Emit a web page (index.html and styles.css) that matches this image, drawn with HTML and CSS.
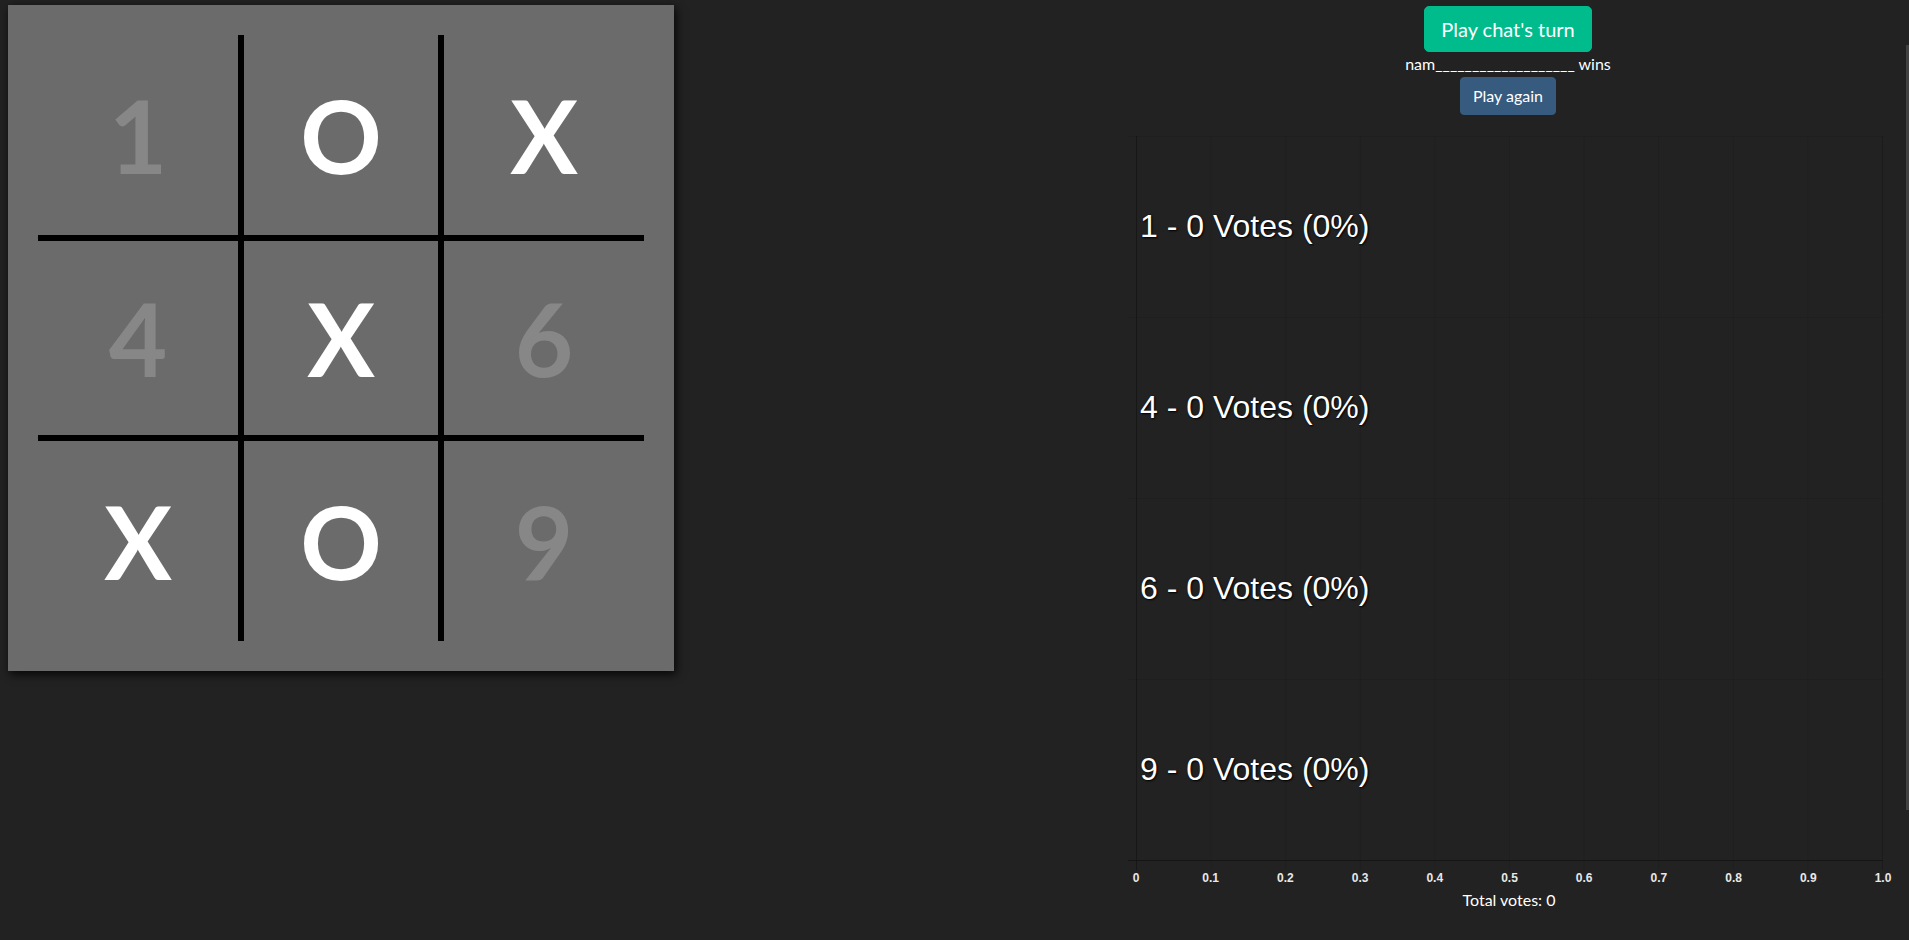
FILE: index.html
```html
<!DOCTYPE html>
<html lang="en">
<head>
<meta charset="utf-8">
<title>Tic Tac Toe</title>
<link rel="stylesheet" href="styles.css">
</head>
<body>
<main class="page">
  <section class="board">
    <div class="grid">
      <div class="cell num">1</div>
      <div class="cell mark">O</div>
      <div class="cell mark">X</div>
      <div class="cell num">4</div>
      <div class="cell mark">X</div>
      <div class="cell num">6</div>
      <div class="cell mark">X</div>
      <div class="cell mark">O</div>
      <div class="cell num">9</div>
    </div>
  </section>

  <section class="panel">
    <div class="controls">
      <button class="btn btn-success btn-lg">Play chat's turn</button>
      <p class="winner">nam___________________ wins</p>
      <button class="btn btn-primary">Play again</button>
    </div>

    <div class="chart">
      <div class="yticks"></div>
      <div class="plot">
        <div class="band"><span class="vote">1 - 0 Votes (0%)</span></div>
        <div class="band"><span class="vote">4 - 0 Votes (0%)</span></div>
        <div class="band"><span class="vote">6 - 0 Votes (0%)</span></div>
        <div class="band"><span class="vote">9 - 0 Votes (0%)</span></div>
      </div>
      <div class="corner"></div>
      <div class="xticks"></div>
      <div class="spacer"></div>
      <div class="xlabels">
        <span>0</span><span>0.1</span><span>0.2</span><span>0.3</span><span>0.4</span><span>0.5</span><span>0.6</span><span>0.7</span><span>0.8</span><span>0.9</span><span>1.0</span>
      </div>
    </div>
    <p class="total">Total votes: 0</p>
  </section>
</main>
<div class="scrollbar"></div>
</body>
</html>
```

FILE: styles.css
```css
html, body {
  margin: 0;
  padding: 0;
  background: #222222;
  color: #ffffff;
  font-family: Lato, "Open Sans", "Liberation Sans", sans-serif;
  font-size: 16px;
  line-height: 1.5;
  overflow: hidden;
}

.page {
  display: flex;
  justify-content: space-between;
  align-items: flex-start;
  padding: 5px 9px 0 8px;
  height: 940px;
  box-sizing: border-box;
}

/* ---------- board ---------- */
.board {
  width: 666px;
  height: 666px;
  box-sizing: border-box;
  padding: 30px;
  background: #6b6b6b;
  box-shadow: 2px 3px 9px rgba(0, 0, 0, 0.85);
}

.grid {
  display: grid;
  grid-template-columns: 200px 194px 200px;
  grid-template-rows: 200px 194px 200px;
  gap: 6px;
  background: #000000;
  width: 606px;
  height: 606px;
}

.cell {
  background: #6b6b6b;
  display: flex;
  align-items: center;
  justify-content: center;
  font-family: Lato, "Liberation Sans", sans-serif;
  font-weight: 700;
  font-size: 101px;
  line-height: normal;
}

.cell.num { color: #878787; }
.cell.mark { color: #ffffff; }

/* ---------- right panel ---------- */
.panel {
  width: 784px;
  display: flex;
  flex-direction: column;
  align-items: stretch;
}

.controls {
  display: flex;
  flex-direction: column;
  align-items: center;
  padding-top: 1px;
}

.btn {
  font-family: Lato, "Open Sans", sans-serif;
  color: #ffffff;
  border: 1px solid transparent;
  cursor: pointer;
  margin: 0;
}

.btn-success {
  background: #00bc8c;
  border-color: #00bc8c;
}

.btn-lg {
  font-size: 20px;
  line-height: 28px;
  padding: 8px 16px;
  border-radius: 5px;
}

.btn-primary {
  background: #375a7f;
  border-color: #375a7f;
  font-size: 16px;
  line-height: 24px;
  padding: 6px 12px;
  border-radius: 4px;
}

.winner {
  margin: 0 0 1px;
  font-size: 16px;
  line-height: 24px;
}

/* ---------- chart ---------- */
.chart {
  display: grid;
  grid-template-columns: 8px 747px;
  grid-template-rows: 725px 9px auto;
  margin: 21px 0 0 12px;
}

.yticks {
  background-image: linear-gradient(to bottom, rgba(0, 0, 0, 0.1) 1px, transparent 1px);
  background-size: 100% 25%;
  border-bottom: 1px solid rgba(0, 0, 0, 0.3);
}

.plot {
  display: grid;
  grid-template-rows: repeat(4, 1fr);
  border-right: 1px solid rgba(0, 0, 0, 0.1);
  border-bottom: 1px solid rgba(0, 0, 0, 0.3);
  background-image:
    linear-gradient(to right, rgba(0, 0, 0, 0.25) 1px, transparent 1px),
    linear-gradient(to right, rgba(0, 0, 0, 0.1) 1px, transparent 1px),
    linear-gradient(to bottom, rgba(0, 0, 0, 0.1) 1px, transparent 1px);
  background-size: 100% 100%, 10% 100%, 100% 25%;
  background-repeat: no-repeat, repeat, repeat;
}

.band {
  display: flex;
  align-items: center;
  padding-left: 4px;
}

.vote {
  font-family: "Liberation Sans", Arial, sans-serif;
  font-size: 32px;
  line-height: 1;
  color: #ffffff;
  text-shadow: 1px 1px 2px #000000, 0 0 1px #000000;
  position: relative;
  top: -1px;
}

.xticks {
  border-right: 1px solid rgba(0, 0, 0, 0.1);
  background-image:
    linear-gradient(to right, rgba(0, 0, 0, 0.25) 1px, transparent 1px),
    linear-gradient(to right, rgba(0, 0, 0, 0.1) 1px, transparent 1px);
  background-size: 100% 100%, 10% 100%;
  background-repeat: no-repeat, repeat;
}

.xlabels {
  display: grid;
  grid-template-columns: repeat(11, 1fr);
  margin: 1px -5% 0;
  font-family: "Liberation Sans", Arial, sans-serif;
  font-weight: 700;
  font-size: 12px;
  line-height: 14px;
  color: #e8e8e8;
  text-align: center;
}

.total {
  margin: 3px 0 0;
  text-align: center;
  font-size: 16px;
  line-height: 24px;
  padding-left: 2px;
}

/* thin scroll indicator on the right edge */
.scrollbar {
  position: absolute;
  top: 45px;
  right: 0;
  width: 3px;
  height: 765px;
  background: #424242;
}
```
